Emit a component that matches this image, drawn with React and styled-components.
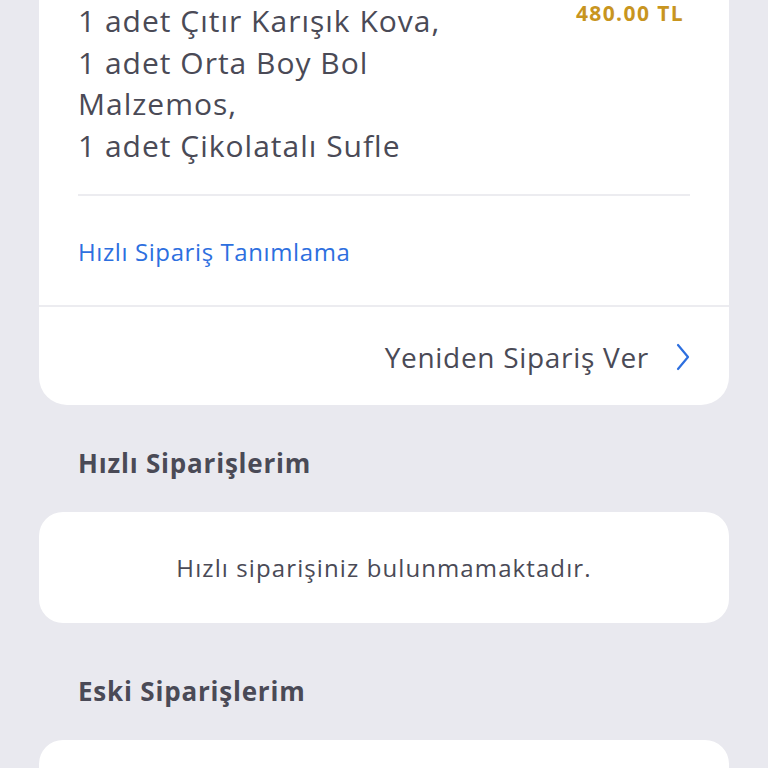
import styled, { createGlobalStyle } from 'styled-components';

const GlobalStyle = createGlobalStyle`
	html, body {
		margin: 0;
		padding: 0;
		background: #e9e9ef;
		font-family: "Open Sans", Lato, sans-serif;
	}
`;

const Page = styled.div`
	padding: 0 39px;
	height: 768px;
	overflow: hidden;
	color: #4a4a56;
`;

const Card = styled.div`
	background: #fff;
	border-radius: ${({ $flatTop }) => ($flatTop ? '0 0 28px 28px' : '24px')};
`;

const OrderBody = styled.div`
	padding: 0 39px;
`;

const ItemsRow = styled.div`
	display: flex;
	justify-content: space-between;
	align-items: flex-start;
	padding-bottom: 28px;
	border-bottom: 2px solid #ececf0;
`;

const Items = styled.div`
	font-size: 30px;
	letter-spacing: 1px;
	line-height: 41.5px;
`;

const Price = styled.div`
	padding-top: 1px;
	font-size: 21px;
	font-weight: 700;
	letter-spacing: 1.4px;
	line-height: 24px;
	color: #c8951f;
	margin-right: 6px;
`;

const LinkRow = styled.div`
	padding: 41px 0 38px;
	font-size: 24px;
	letter-spacing: 0.6px;
	line-height: 30px;
	color: #2d6fdf;
`;

const ReorderRow = styled.div`
	display: flex;
	justify-content: flex-end;
	align-items: center;
	gap: 27px;
	border-top: 2px solid #ececf0;
	padding: 33px 39px 31px;
	font-size: 28px;
	letter-spacing: 0.7px;
	line-height: 34px;
	color: #4a4a56;
`;

const SectionTitle = styled.h2`
	margin: 0;
	padding: ${({ $gap }) => $gap}px 39px 35px;
	font-size: 26px;
	letter-spacing: 0.8px;
	line-height: 28px;
	font-weight: 700;
	color: #4a4a56;
`;

const EmptyCard = styled(Card)`
	height: 111px;
	display: flex;
	align-items: center;
	justify-content: center;
	font-size: 24px;
	letter-spacing: 1.1px;
	color: #4a4a56;
`;

const Chevron = () => (
	<svg width="14" height="28" viewBox="0 0 14 28" fill="none">
		<path d="M2 2l10 12L2 26" stroke="#2d6fdf" strokeWidth="2.2" strokeLinecap="round" strokeLinejoin="round" />
	</svg>
);

export default function App() {
	return (
		<>
			<GlobalStyle />
			<Page>
				<Card $flatTop>
					<OrderBody>
						<ItemsRow>
							<Items>
								1 adet Çıtır Karışık Kova,
								<br />
								1 adet Orta Boy Bol
								<br />
								Malzemos,
								<br />
								1 adet Çikolatalı Sufle
							</Items>
							<Price>480.00 TL</Price>
						</ItemsRow>
						<LinkRow>Hızlı Sipariş Tanımlama</LinkRow>
					</OrderBody>
					<ReorderRow>
						<span>Yeniden Sipariş Ver</span>
						<Chevron />
					</ReorderRow>
				</Card>
				<SectionTitle $gap={44}>Hızlı Siparişlerim</SectionTitle>
				<EmptyCard>Hızlı siparişiniz bulunmamaktadır.</EmptyCard>
				<SectionTitle $gap={54}>Eski Siparişlerim</SectionTitle>
				<EmptyCard />
			</Page>
		</>
	);
}
